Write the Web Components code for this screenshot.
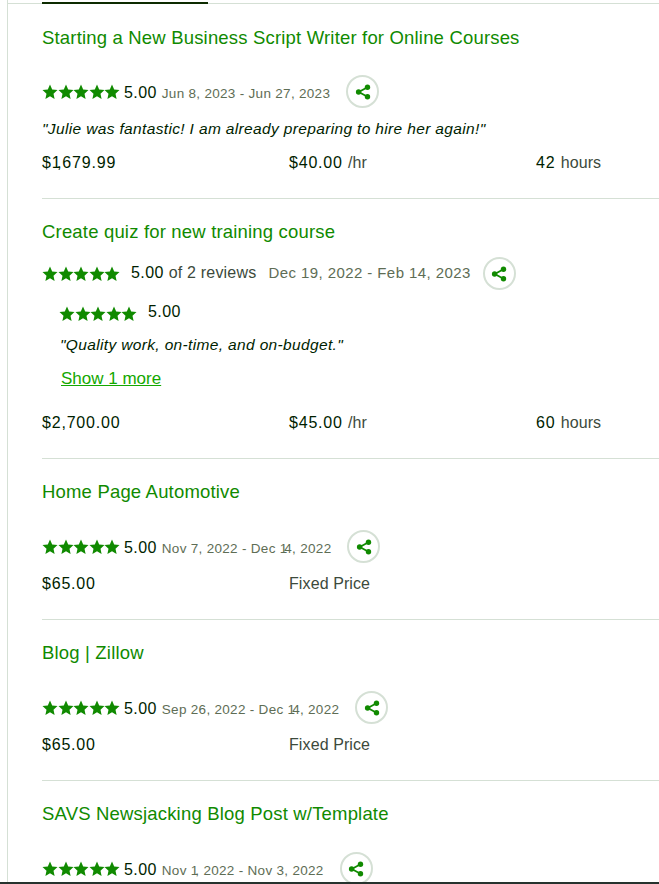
<!DOCTYPE html>
<html>
<head>
<meta charset="utf-8">
<style>
  html, body { margin: 0; padding: 0; height: 884px; overflow: hidden; background: #fff; }
  body { font-family: "Liberation Sans", Arial, sans-serif; color: #001e00; }
</style>
</head>
<body>
<history-panel>
  <job-item title="Starting a New Business Script Writer for Online Courses" rating="5.00" dates="Jun 8, 2023 - Jun 27, 2023" quote="&quot;Julie was fantastic! I am already preparing to hire her again!&quot;" total="$1,679.99" rate="$40.00" hours="42"></job-item>
  <job-item title="Create quiz for new training course" multi total="$2,700.00" rate="$45.00" hours="60"></job-item>
  <job-item title="Home Page Automotive" rating="5.00" dates="Nov 7, 2022 - Dec 14, 2022" total="$65.00" fixed></job-item>
  <job-item title="Blog | Zillow" rating="5.00" dates="Sep 26, 2022 - Dec 14, 2022" total="$65.00" fixed></job-item>
  <job-item title="SAVS Newsjacking Blog Post w/Template" rating="5.00" dates="Nov 1, 2022 - Nov 3, 2022" last></job-item>
</history-panel>

<script>
const STAR = 'M8 .6l2.2 4.9 5.3.6-4 3.6 1.1 5.3L8 12.3l-4.6 2.7 1.1-5.3-4-3.6 5.3-.6z';

// the original face has a much narrower "1" than Liberation Sans
const narrowOnes = (text) => text.replace(/1/g, '<span class="one">1</span>');

class StarRow extends HTMLElement {
  constructor() {
    super();
    this.attachShadow({ mode: 'open' });
    const stars = [0, 1, 2, 3, 4].map(() =>
      `<svg viewBox="0 0 16 16" width="16" height="16"><path d="${STAR}"/></svg>`).join('');
    this.shadowRoot.innerHTML = `
      <style>
        :host { display: inline-flex; fill: #108a00; }
        svg { display: block; margin-right: -.4px; }
      </style>
      ${stars}`;
  }
}
customElements.define('star-row', StarRow);

class ShareButton extends HTMLElement {
  constructor() {
    super();
    this.attachShadow({ mode: 'open' });
    this.shadowRoot.innerHTML = `
      <style>
        :host {
          display: inline-flex; align-items: center; justify-content: center;
          width: 33px; height: 33px; box-sizing: border-box;
          border: 2px solid #d5e0d5; border-radius: 50%; background: #fff;
        }
        svg { display: block; }
      </style>
      <svg viewBox="0 0 16 16" width="16" height="16">
        <path d="M12.5 3.2 3.8 8l8.7 4.8" fill="none" stroke="#108a00" stroke-width="1.8"/>
        <circle cx="12.5" cy="3.2" r="2.7" fill="#108a00"/>
        <circle cx="3.6" cy="8" r="2.7" fill="#108a00"/>
        <circle cx="12.5" cy="12.8" r="2.7" fill="#108a00"/>
      </svg>`;
  }
}
customElements.define('share-button', ShareButton);

class JobItem extends HTMLElement {
  constructor() {
    super();
    this.attachShadow({ mode: 'open' });
  }

  connectedCallback() {
    const a = (n) => this.getAttribute(n);
    const quote = a('quote') ? `<p class="quote">${a('quote').replace(/"/g, '&quot;')}</p>` : '';
    let middle;
    if (this.hasAttribute('multi')) {
      middle = `
        <div class="rating multi">
          <star-row></star-row>
          <span class="score">5.00 <span class="of">of 2 reviews</span></span>
          <span class="range">Dec 19, 2022 - Feb 14, 2023</span>
          <share-button></share-button>
        </div>
        <div class="sub">
          <div class="subrate"><star-row></star-row><span class="score">5.00</span></div>
          <p class="quote">"Quality work, on-time, and on-budget."</p>
          <a class="more">Show 1 more</a>
        </div>`;
    } else {
      middle = `
        <div class="rating">
          <star-row></star-row>
          <span class="score">${a('rating')}</span>
          <span class="dates">${narrowOnes(a('dates'))}</span>
          <share-button></share-button>
        </div>
        ${quote}`;
    }
    let stats = '';
    if (a('total')) {
      stats = `<div class="stats">
        <span>${narrowOnes(a('total'))}</span>
        ${this.hasAttribute('fixed')
          ? '<span class="of">Fixed Price</span><span></span>'
          : `<span>${a('rate')} <span class="of">/hr</span></span><span>${a('hours')} <span class="of">hours</span></span>`}
      </div>`;
    }
    this.shadowRoot.innerHTML = `
      <style>
        :host { display: block; padding: 21px 0 24px; border-bottom: 1px solid #d5e0d5; }
        :host(:first-child) { padding-top: 22px; }
        :host([last]) { border-bottom: 0; }
        h4 { margin: 0; font-size: 18.5px; line-height: 24px; font-weight: 400; color: #108a00; letter-spacing: .18px; }
        .rating { display: flex; align-items: center; margin-top: 26px; height: 33px; }
        :host(:first-child) .rating { margin-top: 25px; }
        .rating.multi { margin-top: 13px; }
        .score { margin-left: 4px; margin-top: 2px; font-size: 16px; letter-spacing: .4px; color: #001e00; }
        .multi .score { margin-left: 11px; margin-top: 0; margin-bottom: 2px; }
        .of { color: #3c4a3c; letter-spacing: .1px; }
        .score .of { letter-spacing: .2px; }
        .one { letter-spacing: -.22em; }
        .dates { margin-left: 5px; margin-top: 3px; font-size: 13.5px; letter-spacing: .3px; color: #5e6d55; }
        .range { margin-left: 12px; margin-bottom: 2px; font-size: 15px; letter-spacing: .42px; color: #5e6d55; }
        share-button { margin-left: 16px; }
        .multi share-button { margin-left: 12px; }
        .quote { margin: 0; font-size: 15.5px; line-height: 22px; font-style: italic; letter-spacing: .35px; color: #001e00; }
        .rating + .quote { margin-top: 10px; }
        .sub { padding-left: 17px; margin-top: 11px; }
        .subrate { display: flex; align-items: center; height: 24px; }
        .subrate star-row { margin-top: 2px; }
        .subrate .score { margin-left: 11px; margin-top: 0; margin-bottom: 2px; }
        .sub .quote { margin-top: 9px; padding-left: 1px; }
        .more { display: block; width: max-content; margin-top: 12px; padding-left: 2px; font-size: 17px; line-height: 22px; color: #14a800; text-decoration: underline; }
        .stats { display: grid; grid-template-columns: 247px 247px 1fr; margin-top: 10px; font-size: 16px; line-height: 22px; letter-spacing: .8px; color: #001e00; }
        :host(:first-child) .stats { margin-top: 12px; }
        :host([multi]) .stats { margin-top: 22px; }
      </style>
      <h4>${a('title')}</h4>
      ${middle}
      ${stats}`;
  }
}
customElements.define('job-item', JobItem);

class HistoryPanel extends HTMLElement {
  constructor() {
    super();
    this.attachShadow({ mode: 'open' });
    this.shadowRoot.innerHTML = `
      <style>
        :host {
          display: flex; flex-direction: column; height: 884px; box-sizing: border-box;
          overflow: hidden; border-bottom: 2px solid #26332e;
        }
        .body { flex: 1; min-height: 0; overflow: hidden; margin-left: 7px; padding-left: 34px; border-left: 1px solid #d5e0d5; }
        .tabs { height: 4px; position: relative; }
        .line { position: absolute; left: -34px; right: 0; top: 3px; height: 1px; background: #d5e0d5; }
        .active { position: absolute; left: 0; top: 2px; width: 166px; height: 2px; background: #0d2b00; }
      </style>
      <div class="body">
        <div class="tabs"><div class="line"></div><div class="active"></div></div>
        <slot></slot>
      </div>`;
  }
}
customElements.define('history-panel', HistoryPanel);
</script>
</body>
</html>
